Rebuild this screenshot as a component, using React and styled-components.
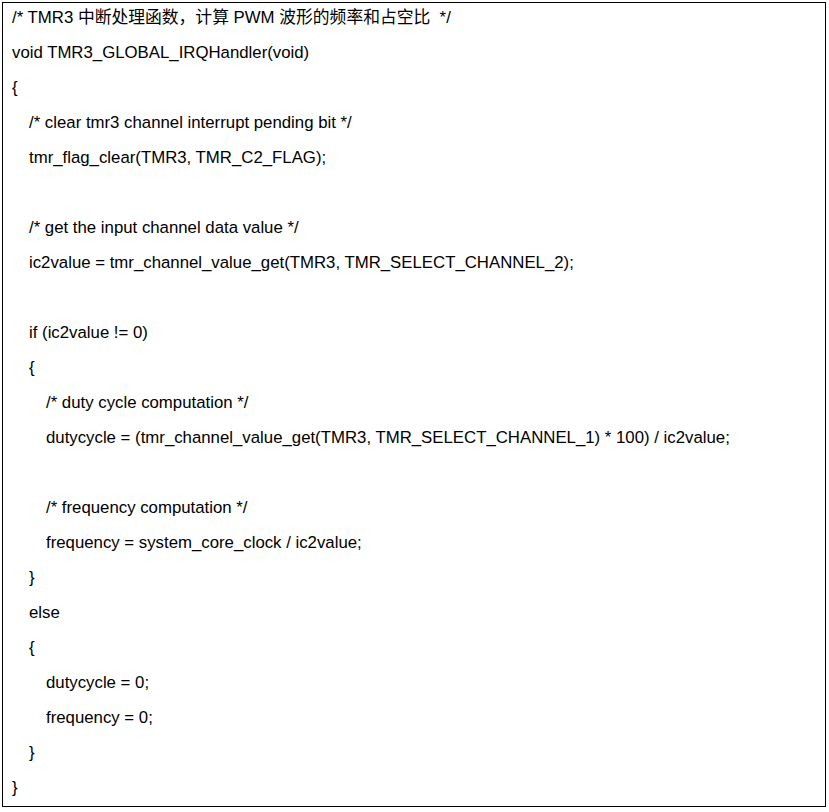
import React from 'react'
import styled, { createGlobalStyle } from 'styled-components'

const lines = [
  [0, '/* TMR3 中断处理函数，计算 PWM 波形的频率和占空比  */'],
  [0, 'void TMR3_GLOBAL_IRQHandler(void)'],
  [0, '{'],
  [1, '/* clear tmr3 channel interrupt pending bit */'],
  [1, 'tmr_flag_clear(TMR3, TMR_C2_FLAG);'],
  [1, ''],
  [1, '/* get the input channel data value */'],
  [1, 'ic2value = tmr_channel_value_get(TMR3, TMR_SELECT_CHANNEL_2);'],
  [1, ''],
  [1, 'if (ic2value != 0)'],
  [1, '{'],
  [2, '/* duty cycle computation */'],
  [2, 'dutycycle = (tmr_channel_value_get(TMR3, TMR_SELECT_CHANNEL_1) * 100) / ic2value;'],
  [2, ''],
  [2, '/* frequency computation */'],
  [2, 'frequency = system_core_clock / ic2value;'],
  [1, '}'],
  [1, 'else'],
  [1, '{'],
  [2, 'dutycycle = 0;'],
  [2, 'frequency = 0;'],
  [1, '}'],
  [0, '}'],
]

const GlobalStyle = createGlobalStyle`
  html, body {
    margin: 0;
    padding: 0;
    background: #fff;
  }
  body {
    font-family: "Liberation Sans", Arial, "Noto Sans CJK SC", sans-serif;
    color: #000;
  }
`

const Page = styled.div`
  padding: 2px 3px 0 2px;
`

const Box = styled.div`
  box-sizing: border-box;
  height: 805px;
  border: 1.5px solid #000;
  overflow: hidden;
`

const Code = styled.div`
  margin-top: -3px;
  padding-left: 9px;
`

const Line = styled.div`
  height: 35px;
  line-height: 35px;
  font-size: 16.8px;
  white-space: pre;
  padding-left: ${(p) => p.$level * 17}px;
`

const App = () => {
  return (
    <Page>
      <GlobalStyle />
      <Box>
        <Code>
          {lines.map(([level, text], i) => (
            <Line key={i} $level={level}>
              {text}
            </Line>
          ))}
        </Code>
      </Box>
    </Page>
  )
}

export default App
